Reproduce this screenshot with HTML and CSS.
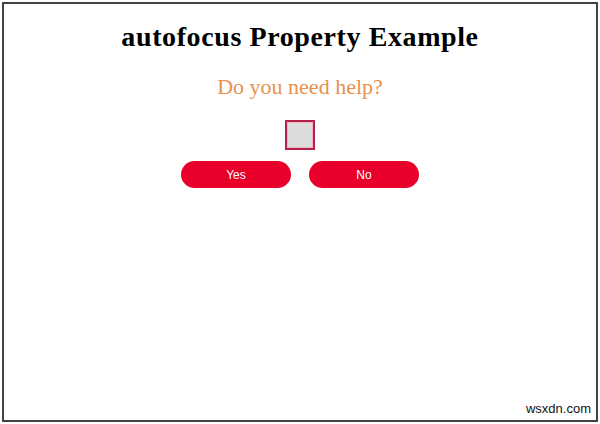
FILE: index.html
```html
<!DOCTYPE html>
<html>
<head>
<meta charset="utf-8">
<link rel="stylesheet" href="styles.css">
</head>
<body>
<div class="frame">
  <h1 class="title">autofocus Property Example</h1>
  <p class="question">Do you need help?</p>
  <div class="check-row"><span class="check"></span></div>
  <div class="buttons">
    <button class="btn">Yes</button>
    <button class="btn">No</button>
  </div>
  <div class="spacer"></div>
  <div class="mark">wsxdn.com</div>
</div>
</body>
</html>
```
FILE: styles.css
```css
html, body {
  margin: 0;
  padding: 0;
  background: #ffffff;
}
body {
  width: 600px;
  height: 424px;
  padding: 2px;
  box-sizing: border-box;
}
.frame {
  box-sizing: border-box;
  width: 596px;
  height: 420px;
  border: 2px solid #444;
  display: flex;
  flex-direction: column;
  align-items: center;
  font-family: "Liberation Serif", "Times New Roman", serif;
}
.title {
  margin: 16px 0 0;
  font-size: 28px;
  line-height: 34px;
  letter-spacing: 0.6px;
  font-weight: bold;
  color: #000;
}
.question {
  margin: 20px 0 0;
  font-size: 22px;
  line-height: 26px;
  color: #e8914d;
}
.check-row {
  margin-top: 20px;
  display: flex;
  justify-content: center;
}
.check {
  box-sizing: border-box;
  width: 30px;
  height: 30px;
  border: 2px solid #b3204a;
  box-shadow: inset 0 0 0 1px #f2b6c6;
  background: #dcdcdc;
  display: block;
}
.buttons {
  margin-top: 11px;
  display: flex;
  gap: 18px;
}
.btn {
  width: 110px;
  height: 27px;
  border: none;
  border-radius: 14px;
  background: #e8002a;
  color: #fff;
  font-family: "Liberation Sans", Arial, sans-serif;
  font-size: 12px;
  padding: 0;
}
.spacer {
  flex: 1;
}
.mark {
  align-self: flex-end;
  margin: 0 5px 4px 0;
  font-family: "Liberation Sans", Arial, sans-serif;
  font-size: 13px;
  line-height: 15px;
  color: #111;
}
```
